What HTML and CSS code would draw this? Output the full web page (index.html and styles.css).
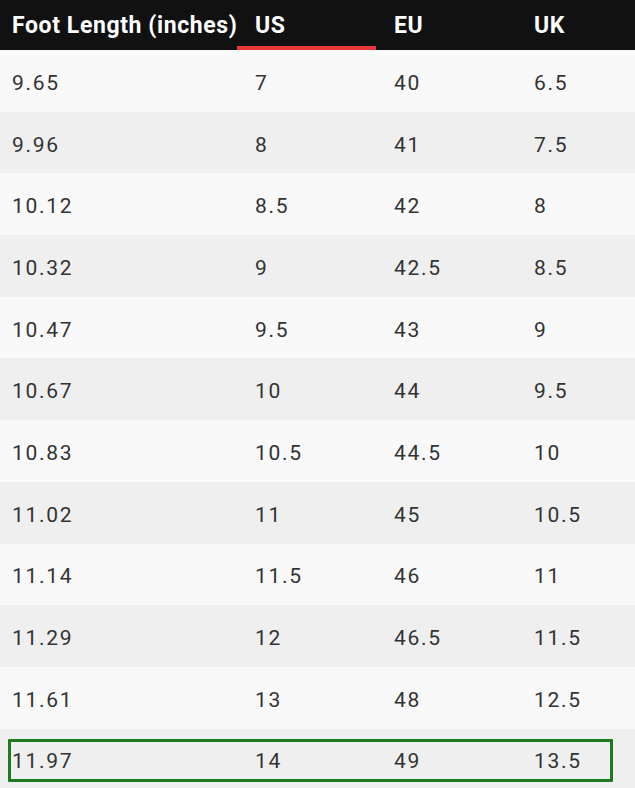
FILE: index.html
```html
<!DOCTYPE html>
<html lang="en">
<head>
<meta charset="utf-8">
<title>Shoe Size Chart</title>
<link rel="stylesheet" href="styles.css">
</head>
<body>
<div class="chart">
  <div class="row head">
    <div class="cell first">Foot Length (inches)</div>
    <div class="cell active">US</div>
    <div class="cell">EU</div>
    <div class="cell">UK</div>
  </div>
  <div class="row"><div class="cell first">9.65</div><div class="cell">7</div><div class="cell">40</div><div class="cell">6.5</div></div>
  <div class="row"><div class="cell first">9.96</div><div class="cell">8</div><div class="cell">41</div><div class="cell">7.5</div></div>
  <div class="row"><div class="cell first">10.12</div><div class="cell">8.5</div><div class="cell">42</div><div class="cell">8</div></div>
  <div class="row"><div class="cell first">10.32</div><div class="cell">9</div><div class="cell">42.5</div><div class="cell">8.5</div></div>
  <div class="row"><div class="cell first">10.47</div><div class="cell">9.5</div><div class="cell">43</div><div class="cell">9</div></div>
  <div class="row"><div class="cell first">10.67</div><div class="cell">10</div><div class="cell">44</div><div class="cell">9.5</div></div>
  <div class="row"><div class="cell first">10.83</div><div class="cell">10.5</div><div class="cell">44.5</div><div class="cell">10</div></div>
  <div class="row"><div class="cell first">11.02</div><div class="cell">11</div><div class="cell">45</div><div class="cell">10.5</div></div>
  <div class="row"><div class="cell first">11.14</div><div class="cell">11.5</div><div class="cell">46</div><div class="cell">11</div></div>
  <div class="row"><div class="cell first">11.29</div><div class="cell">12</div><div class="cell">46.5</div><div class="cell">11.5</div></div>
  <div class="row"><div class="cell first">11.61</div><div class="cell">13</div><div class="cell">48</div><div class="cell">12.5</div></div>
  <div class="row highlight"><div class="cell first">11.97</div><div class="cell">14</div><div class="cell">49</div><div class="cell">13.5</div><span class="mark"></span></div>
</div>
</body>
</html>
```

FILE: styles.css
```css
html, body {
  margin: 0;
  padding: 0;
  background: #f9f9f9;
}
.chart {
  width: 635px;
  height: 788px;
  overflow: hidden;
  font-family: "Roboto", "Liberation Sans", sans-serif;
}
.row {
  display: grid;
  grid-template-columns: 237px 139px 140px 1fr;
  height: 61.7px;
  align-items: center;
  position: relative;
  background: #f9f9f9;
  color: #333;
  font-size: 21px;
  letter-spacing: 1.7px;
}
.row:nth-child(odd) {
  background: #efefef;
}
.row.head {
  height: 50px;
  background: #111;
  color: #fff;
  font-weight: 700;
  font-size: 23px;
  letter-spacing: 0.6px;
  align-items: stretch;
}
.cell {
  padding-left: 18px;
  white-space: nowrap;
  overflow: hidden;
  padding-top: 4px;
}
.cell.first {
  padding-left: 12px;
}
.head .cell {
  display: flex;
  align-items: center;
  padding-top: 0;
  padding-bottom: 0;
}
.head .cell.active {
  position: relative;
}
.head .cell.active::after {
  content: "";
  position: absolute;
  left: 0;
  right: 0;
  bottom: 0;
  height: 4px;
  background: #e8383b;
}
.mark {
  position: absolute;
  left: 8px;
  top: 10px;
  width: 605px;
  height: 43px;
  box-sizing: border-box;
  border: 3px solid #1c7a1f;
  border-radius: 1px;
}
```
